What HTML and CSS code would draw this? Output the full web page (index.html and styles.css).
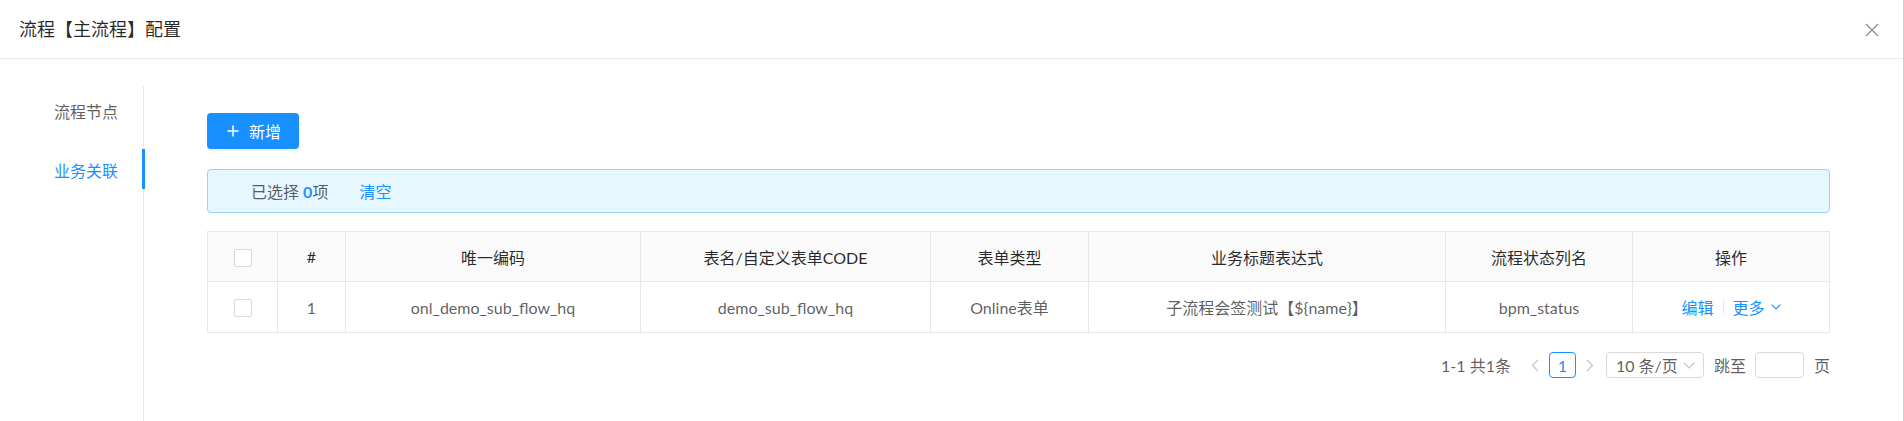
FILE: index.html
```html
<!DOCTYPE html>
<html lang="zh-CN">
<head>
<meta charset="utf-8">
<title>流程配置</title>
<link rel="stylesheet" href="styles.css">
</head>
<body>
<div class="screen">
  <div class="modal">
    <div class="modal-header">
      <div class="modal-title">流程【主流程】配置</div>
      <button class="close" aria-label="关闭">
        <svg width="14" height="14" viewBox="0 0 14 14"><path d="M1 1L13 13M13 1L1 13" stroke="#8c8c8c" stroke-width="1.3" fill="none"/></svg>
      </button>
    </div>
    <div class="modal-body">
      <div class="tabs-nav">
        <div class="tab">流程节点</div>
        <div class="tab active">业务关联<span class="ink"></span></div>
      </div>
      <div class="content">
        <div class="toolbar">
          <button class="btn-primary">
            <svg width="12" height="12" viewBox="0 0 12 12"><path d="M6 0.5V11.5M0.5 6H11.5" stroke="#fff" stroke-width="1.6" fill="none"/></svg>
            <span>新增</span>
          </button>
        </div>
        <div class="alert">
          <span>已选择 <b class="num">0</b>项</span>
          <a class="link clear">清空</a>
        </div>
        <table class="grid">
          <colgroup>
            <col class="c-check"><col class="c-idx"><col class="c-code"><col class="c-table"><col class="c-type"><col class="c-expr"><col class="c-status"><col class="c-op">
          </colgroup>
          <thead>
            <tr>
              <th><span class="checkbox"></span></th>
              <th>#</th>
              <th>唯一编码</th>
              <th>表名/自定义表单CODE</th>
              <th>表单类型</th>
              <th>业务标题表达式</th>
              <th>流程状态列名</th>
              <th>操作</th>
            </tr>
          </thead>
          <tbody>
            <tr>
              <td><span class="checkbox"></span></td>
              <td>1</td>
              <td>onl_demo_sub_flow_hq</td>
              <td>demo_sub_flow_hq</td>
              <td>Online表单</td>
              <td>子流程会签测试【${name}】</td>
              <td>bpm_status</td>
              <td>
                <span class="ops">
                  <a class="link">编辑</a>
                  <span class="divider"></span>
                  <a class="link more">更多
                    <svg width="10" height="6" viewBox="0 0 10 6"><path d="M0.7 0.7L5 5L9.3 0.7" stroke="#1890ff" stroke-width="1.1" fill="none"/></svg>
                  </a>
                </span>
              </td>
            </tr>
          </tbody>
        </table>
        <div class="pagination">
          <span class="total">1-1 共1条</span>
          <span class="pager-arrow prev">
            <svg width="8" height="13" viewBox="0 0 8 13"><path d="M7 1L1.5 6.5L7 12" stroke="#c4c4c4" stroke-width="1.2" fill="none"/></svg>
          </span>
          <span class="page current">1</span>
          <span class="pager-arrow next">
            <svg width="8" height="13" viewBox="0 0 8 13"><path d="M1 1L6.5 6.5L1 12" stroke="#c4c4c4" stroke-width="1.2" fill="none"/></svg>
          </span>
          <span class="size-select">
            <span>10 条/页</span>
            <svg width="12" height="7" viewBox="0 0 12 7"><path d="M0.7 0.7L6 6L11.3 0.7" stroke="#bfbfbf" stroke-width="1.1" fill="none"/></svg>
          </span>
          <span class="jump">跳至</span>
          <span class="jump-input"></span>
          <span class="jump">页</span>
        </div>
      </div>
    </div>
  </div>
  <div class="edge"></div>
</div>
</body>
</html>
```

FILE: styles.css
```css
* { box-sizing: border-box; }
html, body { margin: 0; padding: 0; }
body {
  width: 1904px;
  height: 421px;
  overflow: hidden;
  background: #fff;
  font-family: Lato, "Noto Sans CJK SC", sans-serif;
  font-size: 16px;
  color: rgba(0,0,0,.65);
}
.screen { display: flex; width: 1904px; height: 421px; }
.modal { flex: 1; display: flex; flex-direction: column; background: #fff; }
.edge { width: 2px; background: #cfcfcf; }

.modal-header {
  height: 59px;
  border-bottom: 1px solid #e8e8e8;
  display: flex;
  align-items: center;
  justify-content: space-between;
  padding: 0 24px 0 19px;
}
.modal-title { font-size: 18px; color: rgba(0,0,0,.85); line-height: 24px; }
.close { border: 0; background: none; padding: 0; width: 14px; height: 14px; display: flex; margin-top: 2px; }

.modal-body { flex: 1; display: flex; padding-top: 27px; }
.tabs-nav {
  width: 144px;
  border-right: 1px solid #e8e8e8;
  padding-top: 6px;
  padding-right: 25px;
  display: flex;
  flex-direction: column;
  align-items: flex-end;
}
.tab {
  position: relative;
  height: 40px;
  line-height: 40px;
  color: rgba(0,0,0,.65);
  margin-bottom: 17px;
}
.tab.active { color: #1890ff; padding-top: 4px; line-height: 36px; }
.ink {
  position: absolute;
  right: -27px;
  top: 0;
  width: 3px;
  height: 40px;
  background: #1890ff;
}

.content { flex: 1; padding: 27px 73px 0 63px; }
.toolbar { display: flex; }
.btn-primary {
  height: 36px;
  width: 92px;
  border: 0;
  border-radius: 4px;
  background: #1890ff;
  color: #fff;
  font-family: inherit;
  font-size: 16px;
  display: flex;
  align-items: center;
  gap: 10px;
  padding: 0 0 0 20px;
  box-shadow: 0 2px 0 rgba(0,0,0,.045);
}

.alert {
  margin-top: 20px;
  height: 44px;
  border: 1px solid #91d5ff;
  background: #e6f7ff;
  border-radius: 4px;
  display: flex;
  align-items: center;
  padding-left: 43px;
  color: rgba(0,0,0,.65);
}
.num { color: #1890ff; font-weight: 700; }
.link { color: #1890ff; cursor: pointer; }
.clear { margin-left: 31px; }

.grid {
  margin-top: 18px;
  width: 1622px;
  border-collapse: collapse;
  table-layout: fixed;
}
.c-check { width: 70px; }
.c-idx { width: 68px; }
.c-code { width: 295px; }
.c-table { width: 290px; }
.c-type { width: 158px; }
.c-expr { width: 357px; }
.c-status { width: 187px; }
.c-op { width: 197px; }
.grid th, .grid td {
  border: 1px solid #e8e8e8;
  height: 51px;
  padding: 0 8px;
  text-align: center;
  font-weight: 400;
  white-space: nowrap;
}
.grid th { background: #fafafa; color: rgba(0,0,0,.85); height: 50px; }
.grid td { color: rgba(0,0,0,.65); }
.checkbox {
  display: inline-block;
  width: 18px;
  height: 18px;
  border: 1px solid #d9d9d9;
  border-radius: 2px;
  background: #fff;
  vertical-align: middle;
}
.ops { display: inline-flex; align-items: center; }
.divider { width: 1px; height: 16px; background: #e8e8e8; margin: 0 9px; }
.more { display: inline-flex; align-items: center; gap: 6px; }

.pagination {
  margin-top: 19px;
  display: flex;
  justify-content: flex-end;
  align-items: center;
  height: 26px;
  color: rgba(0,0,0,.65);
}
.total { margin-right: 12px; }
.pager-arrow { width: 24px; height: 26px; display: flex; align-items: center; justify-content: center; }
.page {
  width: 27px;
  height: 26px;
  border: 1px solid #1890ff;
  border-radius: 4px;
  color: #1890ff;
  display: flex;
  align-items: center;
  justify-content: center;
  margin: 0 2px;
}
.size-select {
  margin-left: 4px;
  width: 98px;
  height: 26px;
  border: 1px solid #d9d9d9;
  border-radius: 4px;
  display: flex;
  align-items: center;
  justify-content: space-between;
  padding: 0 8px 0 9px;
}
.jump { margin-left: 10px; }
.jump-input {
  margin-left: 9px;
  width: 49px;
  height: 26px;
  border: 1px solid #d9d9d9;
  border-radius: 4px;
}
```
